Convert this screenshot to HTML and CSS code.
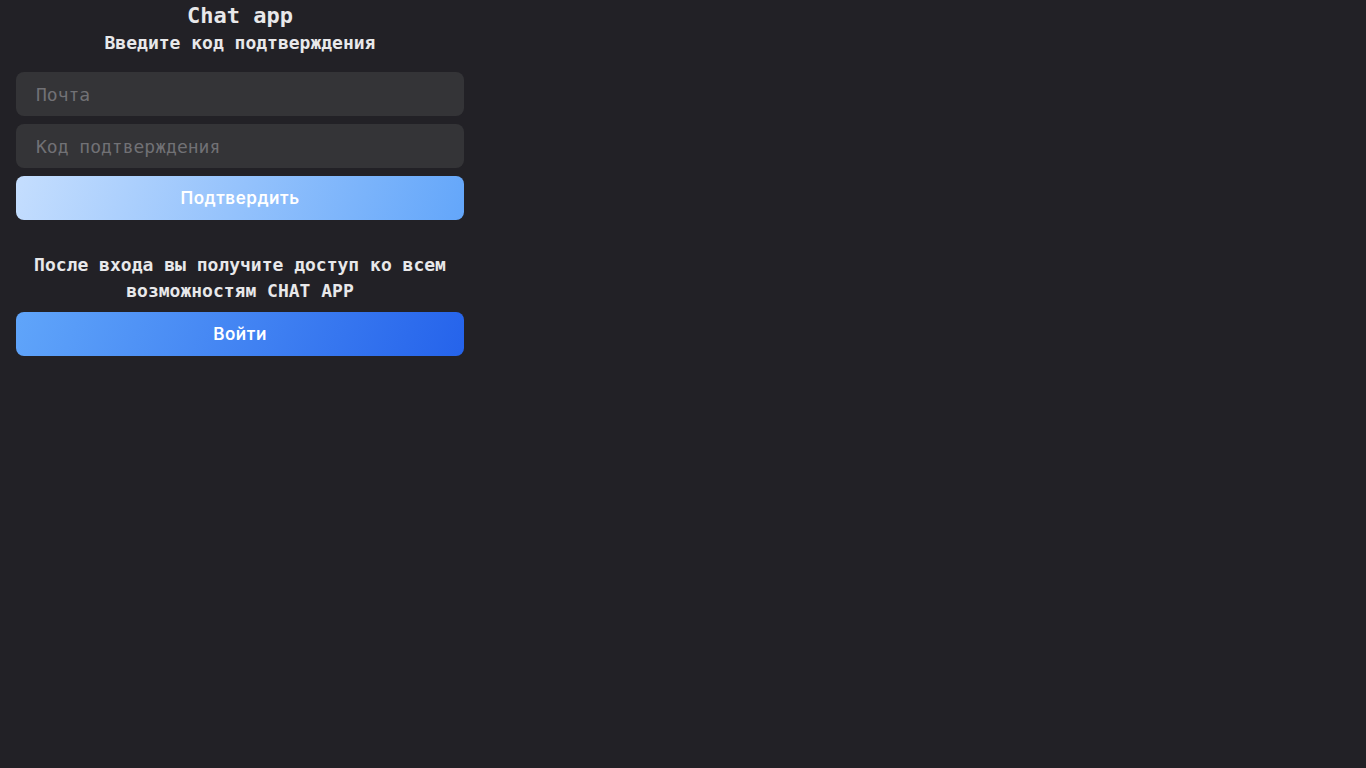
FILE: index.html
```html
<!DOCTYPE html>
<html lang="ru">
<head>
<meta charset="utf-8">
<title>Chat app</title>
<link rel="stylesheet" href="styles.css">
</head>
<body>
<main class="auth">
  <h1 class="title">Chat app</h1>
  <h2 class="subtitle">Введите код подтверждения</h2>
  <form class="form">
    <input class="field" type="email" placeholder="Почта">
    <input class="field" type="text" placeholder="Код подтверждения">
    <button class="btn btn-confirm" type="button">Подтвердить</button>
  </form>
  <p class="note">После входа вы получите доступ ко всем возможностям CHAT APP</p>
  <button class="btn btn-login" type="button">Войти</button>
</main>
</body>
</html>
```
FILE: styles.css
```css
html, body {
  margin: 0;
  background: #222126;
}
body {
  font-family: "DejaVu Sans Mono", monospace;
  color: #e8e8ea;
}
.auth {
  width: 448px;
  padding: 0 16px;
  display: flex;
  flex-direction: column;
}
.title {
  margin: 2px 0 0;
  font-size: 22px;
  line-height: 28px;
  text-align: center;
  font-weight: 700;
}
.subtitle {
  margin: 0;
  font-size: 18px;
  line-height: 26px;
  text-align: center;
  font-weight: 700;
}
.form {
  margin-top: 16px;
  display: flex;
  flex-direction: column;
  gap: 8px;
}
.field {
  height: 44px;
  box-sizing: border-box;
  border: none;
  border-radius: 8px;
  background: #343437;
  padding: 0 20px;
  font-family: "DejaVu Sans Mono", monospace;
  font-size: 18px;
  color: #e8e8ea;
  outline: none;
}
.field::placeholder {
  color: #717175;
}
.btn {
  height: 44px;
  border: none;
  border-radius: 8px;
  font-family: Inter, sans-serif;
  font-weight: 600;
  font-size: 17px;
  letter-spacing: 0.55px;
  color: #ffffff;
  cursor: pointer;
}
.btn-confirm {
  background: linear-gradient(110deg, #c5defe, #63a6fa);
}
.btn-login {
  background: linear-gradient(110deg, #60a5fa, #2563eb);
}
.note {
  margin: 32px 0 8px;
  font-size: 18px;
  line-height: 26px;
  text-align: center;
  font-weight: 700;
}
```
